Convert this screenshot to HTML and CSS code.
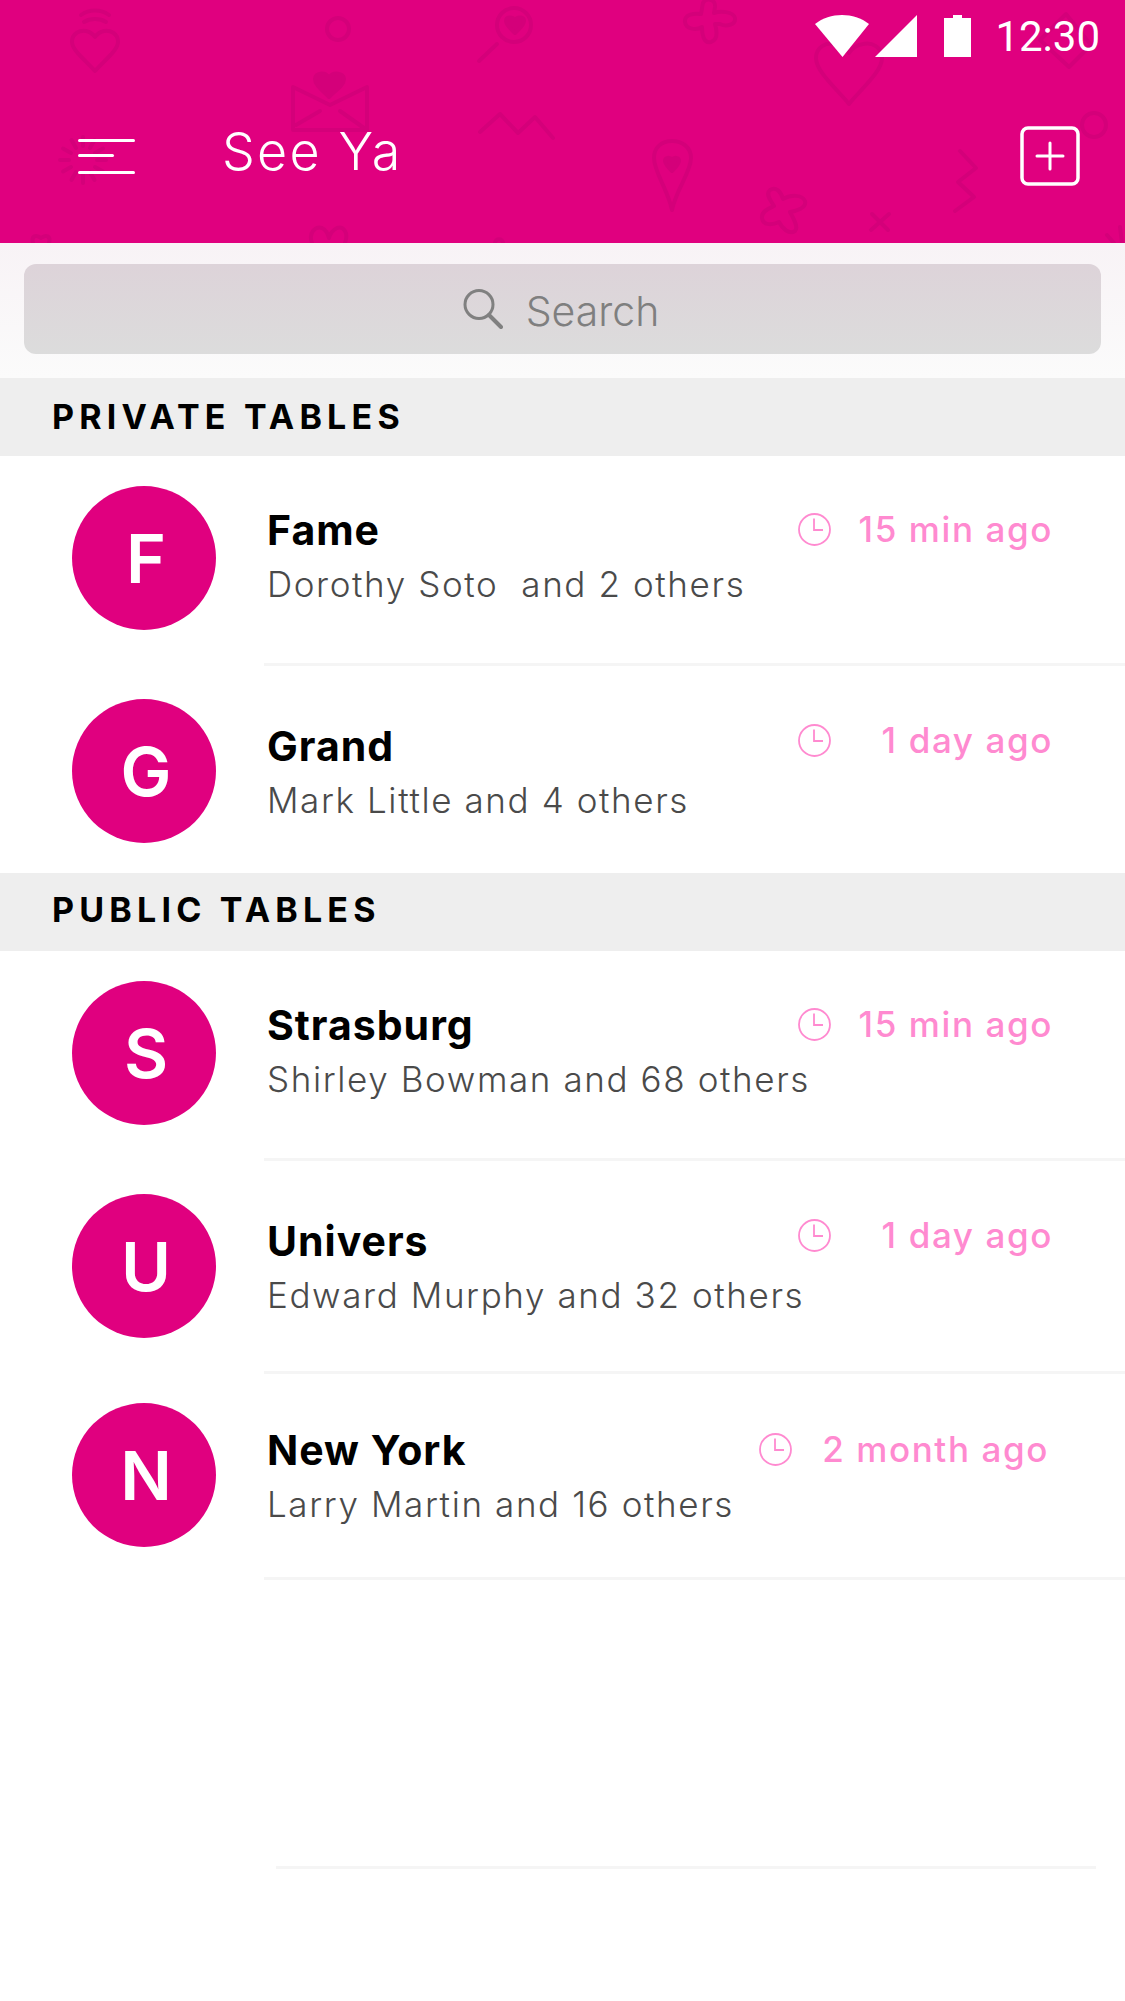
FILE: index.html
```html
<!DOCTYPE html>
<html>
<head>
    <title>See Ya</title>
    <link rel="stylesheet" href="styles.css">
</head>
<body>
    <div class="header">
        <svg class="pattern" width="1125" height="243" viewBox="0 0 1125 243" fill="none" stroke="#d4007a" stroke-width="4" stroke-linecap="round" stroke-linejoin="round">
            <path d="M95 71 C85 60 72 50 72 42 C72 33 80 30 86 31 C90 32 93 34 95 37 C97 34 100 32 104 31 C110 30 118 33 118 42 C118 50 105 60 95 71Z"/>
            <path d="M81 15 C89 9 101 9 109 15 M84 22 C90 18 100 18 106 22"/>
            <circle cx="338" cy="29" r="11"/>
            <circle cx="514" cy="25" r="17"/>
            <path d="M497 44 L479 61"/>
            <path d="M515 33 C510 28 506 25 506 21 C506 17 512 16 515 20 C518 16 524 17 524 21 C524 25 520 28 515 33Z" fill="#d4007a"/>
            <path d="M703 3 C706 -3 716 -1 715 7 L714 13 C720 11 733 11 735 18 C736 25 726 27 720 24 L715 24 C717 31 718 40 711 42 C703 44 702 33 702 27 C697 30 686 30 685 22 C684 14 695 13 701 14 C702 10 702 7 703 3Z"/>
            <path d="M849 104 C838 90 816 72 816 58 C816 47 826 42 835 44 C841 45 846 48 849 53 C852 48 857 45 863 44 C872 42 882 47 882 58 C882 72 860 90 849 104Z"/>
            <path d="M1040 40 L1069 67 L1091 45 L1066 14Z"/>
            <path d="M329 97 C322 90 315 85 315 79 C315 73 325 71 329 78 C333 71 344 73 344 79 C344 85 336 90 329 97Z" fill="#d4007a"/>
            <path d="M293 87 L330 105 L367 87 L367 130 L293 130Z"/>
            <path d="M296 125 L320 111 M340 111 L364 128"/>
            <path d="M480 132 L500 114 L518 133 L535 117 L553 138"/>
            <path d="M672 210 C668 190 654 172 654 158 C654 147 662 141 672 141 C682 141 691 147 691 158 C691 172 676 190 672 210Z"/>
            <path d="M672 171 C668 167 665 164 665 161 C665 157 670 157 672 160 C674 157 679 157 679 161 C679 164 676 167 672 171Z" fill="#d4007a"/>
            <path d="M83 146 V137 M90 148 L94.5 140 M95 153 L103 148.5 M97 160 H106 M95 167 L103 171.5 M90 172 L94.5 180 M83 174 V183 M76 172 L71.500 180 M71 167 L63 171.500 M69 160 H60 M71 153 L63 148.500 M76 148 L71.500 140"/>
            <ellipse cx="1094" cy="125" rx="12" ry="12"/>
            <path d="M960 151 L976 168 L958 182 L974 197 L955 211"/>
            <path d="M770 190 C776 186 781 192 783 199 C790 195 802 194 805 201 C807 208 796 211 790 212 C793 218 799 227 795 231 C789 235 782 228 779 222 C773 225 763 226 762 218 C761 211 770 208 774 206 C771 201 765 194 770 190Z"/>
            <path d="M871 230 L889 214 M872 214 L888 230"/>
            <path d="M312 243 C308 232 316 226 322 228 C326 230 328 234 329 238 C330 234 333 230 337 228 C343 226 349 232 345 243"/>
            <path d="M33 243 C31 236 36 234 41 238 C46 234 51 236 49 243"/>
            <path d="M495 243 C495 238 503 238 503 243"/>
            <path d="M1107 235 L1114 243 M1120 227 L1122 243"/>
        </svg>
        <div class="status-bar">
            <svg class="status-icon wifi" width="54" height="42" viewBox="0 0 54 42"><path d="M0 9 C15 -3 39 -3 54 9 L27.500 42Z" fill="#fff"/></svg>
            <svg class="status-icon signal" width="42" height="42" viewBox="0 0 42 42"><path d="M42 0 V42 H0Z" fill="#fff"/></svg>
            <svg class="status-icon battery" width="27" height="42" viewBox="0 0 27 42"><path d="M0 3 H9 V0 H18 V3 H27 V42 H0Z" fill="#fff"/></svg>
            <span class="clock">12:30</span>
        </div>
        <div class="toolbar">
            <svg class="menu-icon" width="57" height="35" viewBox="0 0 57 35" fill="#fff">
                <rect x="0" y="0" width="57" height="3" rx="1.5"/>
                <rect x="0" y="15" width="36" height="3" rx="1.5"/>
                <rect x="0" y="32" width="57" height="3" rx="1.5"/>
            </svg>
            <div class="app-title">See Ya</div>
            <svg class="add-icon" width="60" height="60" viewBox="0 0 60 60" fill="none" stroke="#fff" stroke-width="3.500" stroke-linecap="round">
                <rect x="2" y="2" width="56" height="56" rx="6"/>
                <path d="M30 17 V43 M17 30 H43" stroke-width="3"/>
            </svg>
        </div>
    </div>

    <div class="search-zone">
        <div class="search-box">
            <svg width="40" height="40" viewBox="0 0 40 40" fill="none" stroke="#808080" stroke-width="3" stroke-linecap="round">
                <circle cx="16" cy="15.500" r="14"/>
                <path d="M26 26 L38 38" stroke-width="4"/>
            </svg>
            <span class="search-text">Search</span>
        </div>
    </div>

    <div class="section-head">PRIVATE TABLES</div>

    <div class="row row-fame">
        <div class="avatar">F</div>
        <div class="row-body">
            <div class="row-top">
                <div class="row-title">Fame</div>
                <div class="time">
                    <svg class="clock-icon" width="33" height="33" viewBox="0 0 33 33" fill="none" stroke="#ff8ad0" stroke-width="1.800"><circle cx="16.500" cy="16.500" r="15.500"/><path d="M16 5.500 V17 H25"/></svg>
                    <span>15 min ago</span>
                </div>
            </div>
            <div class="row-sub">Dorothy Soto &nbsp;and 2 others</div>
        </div>
    </div>
    <div class="row row-grand">
        <div class="avatar">G</div>
        <div class="row-body">
            <div class="row-top">
                <div class="row-title">Grand</div>
                <div class="time time-up">
                    <svg class="clock-icon" width="33" height="33" viewBox="0 0 33 33" fill="none" stroke="#ff8ad0" stroke-width="1.800"><circle cx="16.500" cy="16.500" r="15.500"/><path d="M16 5.500 V17 H25"/></svg>
                    <span>1 day ago</span>
                </div>
            </div>
            <div class="row-sub">Mark Little and 4 others</div>
        </div>
    </div>

    <div class="section-head section-public">PUBLIC TABLES</div>

    <div class="row row-strasburg">
        <div class="avatar">S</div>
        <div class="row-body">
            <div class="row-top">
                <div class="row-title">Strasburg</div>
                <div class="time">
                    <svg class="clock-icon" width="33" height="33" viewBox="0 0 33 33" fill="none" stroke="#ff8ad0" stroke-width="1.800"><circle cx="16.500" cy="16.500" r="15.500"/><path d="M16 5.500 V17 H25"/></svg>
                    <span>15 min ago</span>
                </div>
            </div>
            <div class="row-sub">Shirley Bowman and 68 others</div>
        </div>
    </div>
    <div class="row row-univers">
        <div class="avatar">U</div>
        <div class="row-body">
            <div class="row-top">
                <div class="row-title">Univers</div>
                <div class="time time-up">
                    <svg class="clock-icon" width="33" height="33" viewBox="0 0 33 33" fill="none" stroke="#ff8ad0" stroke-width="1.800"><circle cx="16.500" cy="16.500" r="15.500"/><path d="M16 5.500 V17 H25"/></svg>
                    <span>1 day ago</span>
                </div>
            </div>
            <div class="row-sub">Edward Murphy and 32 others</div>
        </div>
    </div>
    <div class="row row-newyork">
        <div class="avatar">N</div>
        <div class="row-body">
            <div class="row-top">
                <div class="row-title">New York</div>
                <div class="time time-wide">
                    <svg class="clock-icon" width="33" height="33" viewBox="0 0 33 33" fill="none" stroke="#ff8ad0" stroke-width="1.800"><circle cx="16.500" cy="16.500" r="15.500"/><path d="M16 5.500 V17 H25"/></svg>
                    <span>2 month ago</span>
                </div>
            </div>
            <div class="row-sub">Larry Martin and 16 others</div>
        </div>
    </div>

    <div class="empty-row"></div>
</body>
</html>
```

FILE: styles.css
```css
body {
    font-family: Inter, "Liberation Sans", sans-serif;
    margin: 0;
    background-color: #fff;
    height: 2001px;
    overflow: hidden;
}
.header {
    position: relative;
    height: 243px;
    background-color: #e0007f;
    overflow: hidden;
}
.pattern {
    position: absolute;
    left: 0;
    top: 0;
}
.status-bar {
    position: relative;
    display: flex;
    justify-content: flex-end;
    align-items: flex-start;
    padding: 15px 25px 0 0;
    height: 42px;
}
.wifi {
    margin-right: 6px;
}
.signal {
    margin-right: 27px;
}
.battery {
    margin-right: 24px;
}
.clock {
    font-family: Roboto, sans-serif;
    font-size: 42px;
    line-height: 42px;
    color: #fff;
    margin-top: 1px;
}
.toolbar {
    position: relative;
    display: flex;
    align-items: center;
    padding: 0 45px 0 78px;
    margin-top: 69px;
}
.menu-icon {
    flex: none;
}
.app-title {
    flex: 1;
    margin-left: 87px;
    margin-top: -9px;
    font-size: 52px;
    font-weight: 300;
    letter-spacing: 2.2px;
    color: #fff;
}
.search-zone {
    height: 135px;
    padding: 21px 24px 0;
    box-sizing: border-box;
    background: linear-gradient(#f8f3f6, #fbfbfb);
}
.search-box {
    display: flex;
    justify-content: center;
    align-items: center;
    gap: 23px;
    height: 90px;
    padding-right: 3px;
    box-sizing: border-box;
    border-radius: 12px;
    background: linear-gradient(#ddd3d9, #dcdcdc);
}
.search-text {
    font-size: 41px;
    font-weight: 300;
    color: #7f7f7f;
    margin-top: 4px;
}
.section-head {
    height: 78px;
    line-height: 78px;
    padding-left: 52px;
    background-color: #eeeeee;
    color: #000;
    font-size: 34px;
    font-weight: 700;
    letter-spacing: 5.2px;
}
.section-public {
    line-height: 73px;
}
.row {
    display: flex;
    align-items: flex-start;
    padding-left: 72px;
}
.avatar {
    flex: none;
    width: 144px;
    height: 144px;
    line-height: 144px;
    border-radius: 50%;
    background-color: #e0007f;
    color: #fff;
    text-align: center;
    font-size: 68px;
    font-weight: 600;
    text-indent: 4px;
}
.row-body {
    flex: 1;
    box-sizing: border-box;
    margin-left: 48px;
    padding-left: 3px;
    border-bottom: 3px solid #f5f5f5;
}
.row-fame .avatar, .row-strasburg .avatar { margin-top: 30px; }
.row-grand .avatar, .row-univers .avatar { margin-top: 33px; }
.row-newyork .avatar { margin-top: 29px; }
.row-fame .row-body, .row-strasburg .row-body { height: 210px; padding-top: 50px; }
.row-grand .row-body { height: 207px; padding-top: 56px; border-bottom: none; }
.row-univers .row-body { height: 213px; padding-top: 56px; }
.row-newyork .row-body { height: 206px; padding-top: 52px; }
.row-top {
    display: flex;
    justify-content: space-between;
    align-items: center;
    height: 48px;
}
.row-title {
    font-size: 41px;
    font-weight: 700;
    letter-spacing: 1px;
    color: #000;
}
.time {
    display: flex;
    justify-content: space-between;
    align-items: center;
    width: 255px;
    margin-right: 72px;
    margin-bottom: 2px;
    font-size: 35px;
    font-weight: 500;
    letter-spacing: 1.6px;
    color: #ff8ad0;
}
.time-up {
    margin-bottom: 12px;
}
.time-wide {
    width: 290px;
    margin-right: 76px;
}
.row-sub {
    font-size: 35px;
    line-height: 44px;
    font-weight: 300;
    letter-spacing: 1.6px;
    color: #4a4a4a;
    margin-top: 8px;
}
.empty-row {
    height: 3px;
    margin: 286px 29px 0 276px;
    background-color: #f5f5f5;
}
```
